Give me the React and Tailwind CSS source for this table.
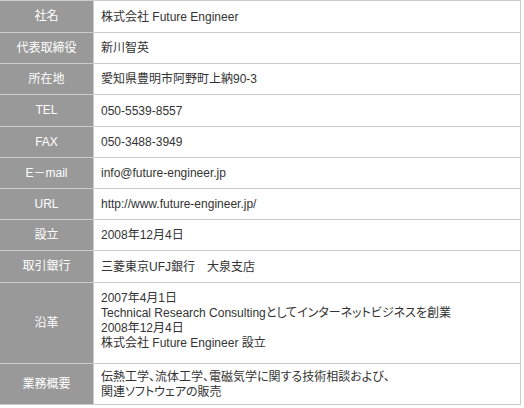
import React from 'react';

// pad: vertical padding classes for the value cell, measured per row
const rows = [
  { label: '社名', value: ['株式会社 Future Engineer'], pad: 'pt-[9px] pb-[7px]' },
  { label: '代表取締役', value: ['新川智英'], pad: 'pt-[8px] pb-[7px]' },
  { label: '所在地', value: ['愛知県豊明市阿野町上納90-3'], pad: 'pt-[8px] pb-[7px]' },
  { label: 'TEL', value: ['050-5539-8557'], pad: 'pt-[9px] pb-[7px]' },
  { label: 'FAX', value: ['050-3488-3949'], pad: 'pt-[8px] pb-[7px]' },
  { label: 'E－mail', value: ['info@future-engineer.jp'], pad: 'pt-[8px] pb-[7px]' },
  { label: 'URL', value: ['http://www.future-engineer.jp/'], pad: 'pt-[8px] pb-[7px]' },
  { label: '設立', value: ['2008年12月4日'], pad: 'pt-[8px] pb-[7px]' },
  { label: '取引銀行', value: ['三菱東京UFJ銀行　大泉支店'], pad: 'pt-[9px] pb-[7px]' },
  {
    label: '沿革',
    value: [
      '2007年4月1日',
      'Technical Research Consultingとしてインターネットビジネスを創業',
      '2008年12月4日',
      '株式会社 Future Engineer 設立',
    ],
    pad: 'pt-[8px] pb-[12px]',
  },
  {
    label: '業務概要',
    value: ['伝熱工学、流体工学、電磁気学に関する技術相談および、', '関連ソフトウェアの販売'],
    pad: 'pt-[6px] pb-[4px]',
  },
];

const App = () => {
  return (
    <div className="bg-white w-[524px] h-[408px] font-['Liberation_Sans','Noto_Sans_CJK_JP',sans-serif] text-[12px] leading-[15px] [font-feature-settings:'palt']">
      <div className="w-[521px] border-t border-r border-[#cccccc]">
        {rows.map((row) => (
          <div key={row.label} className="flex border-b border-[#cccccc]">
            {/* label column */}
            <div className="w-[94px] shrink-0 bg-[#999999] border-r border-[#cccccc] flex items-center justify-center text-white">
              {row.label}
            </div>
            <div className={`flex-1 pl-[7px] text-[#333333] ${row.pad}`}>
              {row.value.map((line, i) => (
                <div key={i}>{line}</div>
              ))}
            </div>
          </div>
        ))}
      </div>
    </div>
  );
};

export default App;
